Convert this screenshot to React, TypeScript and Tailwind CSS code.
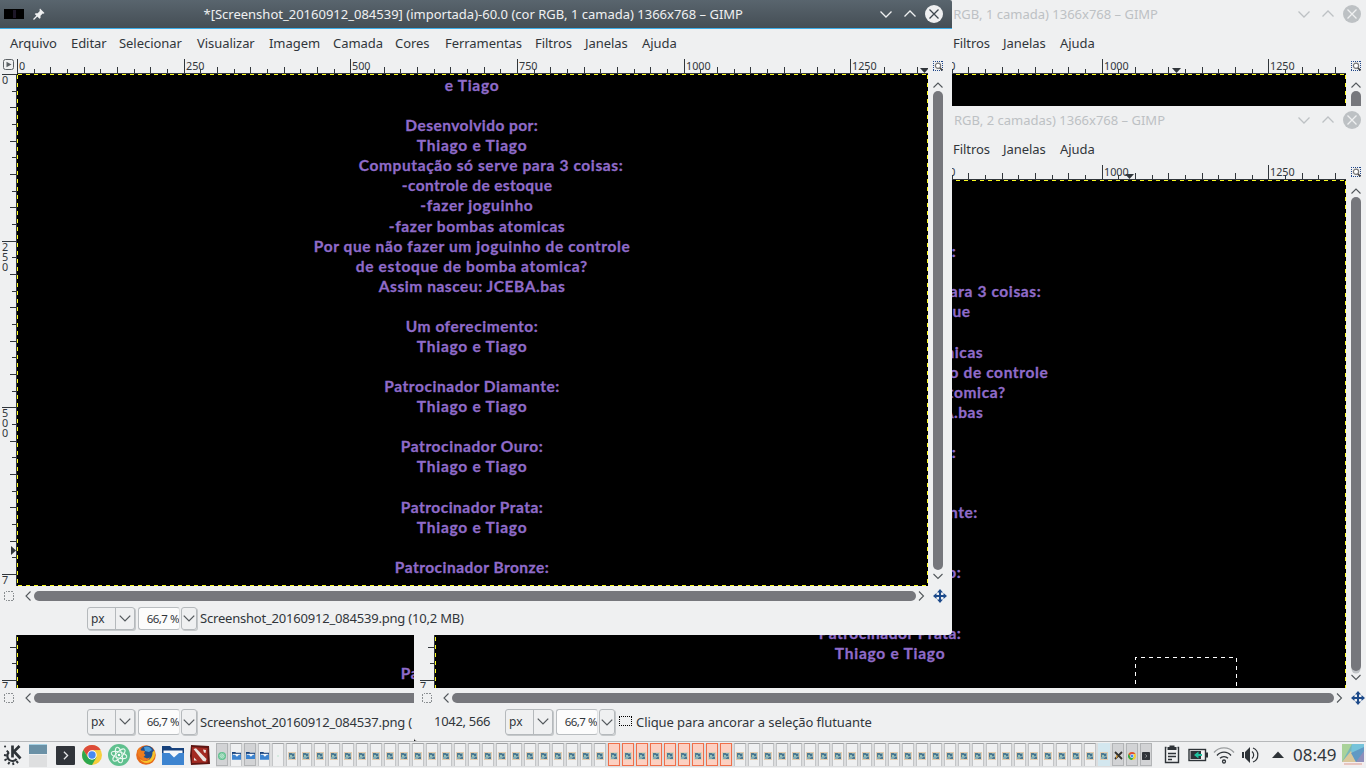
import React, { useLayoutEffect, useRef } from "react";

type Line = { text: string; left: number; right: number } | null;

const THIAGO: Line = { text: "Thiago e Tiago", left: 417, right: 527 };

const CREDITS: Line[] = [
  { text: "e Tiago", left: 445, right: 499 },
  null,
  { text: "Desenvolvido por:", left: 405.5, right: 538 },
  THIAGO,
  { text: "Computação só serve para 3 coisas:", left: 359, right: 623 },
  { text: "-controle de estoque", left: 402, right: 552 },
  { text: "-fazer joguinho", left: 420.5, right: 533 },
  { text: "-fazer bombas atomicas", left: 389, right: 565 },
  { text: "Por que não fazer um joguinho de controle", left: 314, right: 630 },
  { text: "de estoque de bomba atomica?", left: 356, right: 587.5 },
  { text: "Assim nasceu: JCEBA.bas", left: 379, right: 565 },
  null,
  { text: "Um oferecimento:", left: 406, right: 538 },
  THIAGO,
  null,
  { text: "Patrocinador Diamante:", left: 384.5, right: 559.5 },
  THIAGO,
  null,
  { text: "Patrocinador Ouro:", left: 401, right: 543 },
  THIAGO,
  null,
  { text: "Patrocinador Prata:", left: 401, right: 543 },
  THIAGO,
  null,
  { text: "Patrocinador Bronze:", left: 395, right: 549 },
];

/* Spreads the letters of one credit line over its measured width. */
function CreditLine({ line }: { line: Line }) {
  const ref = useRef<HTMLSpanElement>(null);
  useLayoutEffect(() => {
    const el = ref.current;
    if (!el || !line) return;
    el.style.letterSpacing = "0px";
    const natural = el.getBoundingClientRect().width;
    const target = line.right - line.left + 0.5;
    el.style.letterSpacing = (target - natural) / line.text.length + "px";
  }, [line]);
  return (
    <div className="h-[20.08px] whitespace-nowrap leading-[20px]">
      {line && (
        <span ref={ref} className="inline-block" style={{ marginLeft: line.left - 17.2 }}>
          {line.text}
        </span>
      )}
    </div>
  );
}

/* Shows the credit rows from..to, moved down by rowsDown rows. */
function Credits({ rowsDown, from, to }: { rowsDown: number; from: number; to: number }) {
  return (
    <div
      className="font-['Lato'] text-[15.5px] font-bold text-[#8f6bc9] [-webkit-text-stroke:0.3px_#8f6bc9]"
      style={{ paddingTop: 1 + (rowsDown + from) * 20.08 }}
    >
      {CREDITS.slice(from, to).map((l, i) => (
        <CreditLine key={i} line={l} />
      ))}
    </div>
  );
}

const STEPS = Array.from({ length: 55 }, (_, i) => i);

function HRuler({ marker }: { marker: number }) {
  return (
    <svg width="911" height="16" className="block shrink-0" shapeRendering="crispEdges">
      <rect x="-1" y="15" width="912" height="1" fill="#31363b" />
      {STEPS.map((i) => {
        const h = i % 10 === 0 ? 14 : i % 2 === 0 ? 6 : 4;
        return <rect key={i} x={Math.round((i * 50) / 3)} y={15 - h} width="1" height={h} fill="#31363b" />;
      })}
      {[0, 250, 500, 750, 1000, 1250].map((n) => (
        <text key={n} x={Math.round((n * 2) / 3) + 2} y="12" fontSize="10.8" fill="#31363b" fontFamily="Noto Sans, sans-serif">
          {n}
        </text>
      ))}
      <path d={`M${marker - 4} 10h9l-4.5 5z`} fill="#31363b" shapeRendering="auto" />
    </svg>
  );
}

function VRuler({ height, marker }: { height: number; marker?: number }) {
  const labels: [string, number][] = [["0", 0], ["250", 167], ["500", 333], ["7", 500]];
  return (
    <svg width="17" height={height} className="block shrink-0" shapeRendering="crispEdges">
      <rect x="16" y="0" width="1" height={height} fill="#31363b" />
      {STEPS.slice(0, 31).map((i) => {
        const w = i % 10 === 0 ? 14 : i % 2 === 0 ? 6 : 4;
        return <rect key={i} x={16 - w} y={Math.round((i * 50) / 3)} width={w} height="1" fill="#31363b" />;
      })}
      {labels.map(([s, y]) =>
        s.split("").map((c, k) => (
          <text key={s + k} x="2" y={y + 10 + k * 10} fontSize="10.8" fill="#31363b" fontFamily="Noto Sans, sans-serif">
            {c}
          </text>
        ))
      )}
      {marker !== undefined && <path d={`M11 ${marker - 4.5}v9l5-4.5z`} fill="#31363b" shapeRendering="auto" />}
    </svg>
  );
}

function Chevron({ dir, color = "#53585c", size = 12 }: { dir: "up" | "down" | "left" | "right"; color?: string; size?: number }) {
  const d = {
    up: "M1.5 8.5 6 4l4.500 4.500",
    down: "M1.500 4 6 8.500 10.500 4",
    left: "M8.500 1.500 4 6l4.500 4.500",
    right: "M4 1.500 8.500 6 4 10.500",
  }[dir];
  return (
    <svg width={size} height={size} viewBox="0 0 12 12" className="block shrink-0">
      <path d={d} fill="none" stroke={color} strokeWidth="1.1" />
    </svg>
  );
}

const MENU = ["Arquivo", "Editar", "Selecionar", "Visualizar", "Imagem", "Camada", "Cores", "Ferramentas", "Filtros", "Janelas", "Ajuda"];

function UnitBoxes({ tall }: { tall: boolean }) {
  const h = tall ? "h-[26px]" : "h-[23px]";
  return (
    <>
      <div className={`flex w-[48px] items-center rounded-[3px] border border-[#b5b9bc] bg-[#eff0f1] shadow-[1px_1px_0_#c5c8ca] ${h}`}>
        <span className="w-[27px] pl-[3px] text-[12px]">px</span>
        <span className="flex h-full flex-1 items-center justify-center border-l border-[#b5b9bc] pb-[2px]">
          <Chevron dir="down" size={14} />
        </span>
      </div>
      <div className={`ml-[3px] flex w-[42px] items-center justify-end overflow-hidden whitespace-nowrap rounded-[3px] border border-[#b9bdc0] border-r-[#e0e2e3] bg-[#fcfcfc] text-[11.5px] tracking-[-0.5px] ${h}`}>
        66,7 %
      </div>
      <div className={`ml-px flex w-[16px] items-center justify-center rounded-[3px] border border-[#b5b9bc] pb-px shadow-[1px_1px_0_#c5c8ca] ${h}`}>
        <Chevron dir="down" size={14} />
      </div>
    </>
  );
}

interface WinProps {
  title: string;
  active?: boolean;
  titleEnd: string;
  tall?: boolean;
  marker: number;
  vMarker?: number;
  rowsDown?: number;
  rows?: [number, number];
  menuFrom?: number;
  status: React.ReactNode;
  coords?: string;
  selection?: boolean;
}

function GimpWindow({
  title,
  active = false,
  titleEnd,
  tall = false,
  marker,
  vMarker,
  rowsDown = 0,
  rows = [0, 25],
  menuFrom = 0,
  status,
  coords,
  selection,
}: WinProps) {
  const tc = active ? "#eff0f1" : "#bdc1c4";
  return (
    <div className="flex h-[635px] w-[952px] shrink-0 flex-col bg-[#eff0f1]">
      <div className={`flex h-[29px] shrink-0 items-center border-b ${active ? "border-[#3daee9] bg-linear-to-b from-[#59656e] to-[#454e55]" : "border-[#eff0f1]"}`}>
        {active && (
          <>
            <div className="ml-1 flex h-[10px] w-5 justify-center bg-black">
              <div className="mt-px h-2 w-[3px] bg-[#1d1728]" />
            </div>
            <svg width="12" height="12" viewBox="0 0 12 12" className="ml-[9px] block shrink-0">
              <path d="M7 .5 11.500 5l-1 .7-.8-.2-2.200 2.200v2.300l-1 .8L1.700 6l1-.8h2L6.800 3l-.3-1.200z" fill="#eff0f1" />
              <path d="M.5 11.500 4.500 7.500" stroke="#eff0f1" strokeWidth="1.300" />
            </svg>
          </>
        )}
        <span className={`flex-1 whitespace-nowrap pt-[2px] text-right text-[13px] ${titleEnd}`} style={{ color: tc }}>
          {title}
        </span>
        <svg width="66" height="20" viewBox="0 0 66 20" className="mr-[8px] block shrink-0">
          <path d="M2.500 7.500 8 13l5.500-5.500M26.500 12.500 32 7l5.500 5.500" fill="none" stroke={tc} strokeWidth="1.300" />
          <circle cx="56" cy="10" r="9" fill={tc} />
          <path d="M51.500 5.500l9 9m0-9-9 9" stroke={active ? "#3f484f" : "#eff0f1"} strokeWidth="1.300" />
        </svg>
      </div>
      <div className="grid h-[29px] shrink-0 grid-cols-[61px_48px_78px_72px_64px_62px_50px_90px_50px_57px_auto] items-center pl-[10px] text-[13px] tracking-[-0.05px]">
        {MENU.map((m, i) => (
          <span key={m}>{i >= menuFrom ? m : ""}</span>
        ))}
      </div>
      <div className="flex h-4 shrink-0">
        <div className="flex w-[17px] pl-[3px] pt-px">
          <svg width="12" height="12" viewBox="0 0 12 12" className="block">
            <rect x=".5" y=".5" width="10" height="10" rx="2" fill="none" stroke="#5c6165" />
            <path d="M3.500 2.700 8.500 5.500l-5 2.800z" fill="#5c6165" />
          </svg>
        </div>
        <HRuler marker={marker} />
        <div className="flex flex-1 pl-[5px] pt-[3px]">
          <svg width="11" height="11" viewBox="0 0 11 11" className="block">
            <g fill="#20478a" shapeRendering="crispEdges">
              {[0, 2, 4, 6, 8].map((k) => (
                <React.Fragment key={k}>
                  <rect x={k} y="0" width="1" height="1" />
                  <rect x={k} y="9" width="1" height="1" />
                  <rect x="0" y={k} width="1" height="1" />
                  <rect x="9" y={k} width="1" height="1" />
                </React.Fragment>
              ))}
            </g>
            <circle cx="5" cy="4.800" r="2.600" fill="#fff" stroke="#777" strokeWidth="1.200" />
            <path d="M7 7l2.500 2.500" stroke="#444" strokeWidth="1.700" />
          </svg>
        </div>
      </div>
      <div className={`flex shrink-0 ${tall ? "h-[508px]" : "h-[512px]"}`}>
        <VRuler height={tall ? 508 : 512} marker={vMarker} />
        <div className="relative w-[911px] overflow-hidden bg-black">
          <Credits rowsDown={rowsDown} from={rows[0]} to={rows[1]} />
          <svg width="911" height="512" className="absolute left-0 top-0" shapeRendering="crispEdges">
            <path d="M0 .5H911M.5 0V512M910.500 0V512M0 511.500H911" fill="none" stroke="#fafa1e" strokeDasharray="4 4" strokeDashoffset="7" />
            {selection && <path d="M700.500 512V477.500H801.500V512" fill="none" stroke="#fff" strokeDasharray="4 4" />}
          </svg>
        </div>
        <div className="flex flex-1 flex-col items-center pr-[4px] pt-[5px]">
          <Chevron dir="up" />
          <div className={`w-[10px] flex-1 rounded-full bg-[#76777c] ${selection ? "shadow-[0_3px_0_-0.5px_#bfc3c6]" : ""}`} />
          <Chevron dir="down" />
          <div className={selection ? "h-[5px]" : "h-1"} />
        </div>
      </div>
      <div className="flex h-5 shrink-0 items-center">
        <svg width="10" height="10" viewBox="0 0 10 10" className="ml-1 block shrink-0" shapeRendering="crispEdges">
          <path d="M.5 3V.5H3M.5 7v2.500H3M7 .5h2.500V3M7 9.500h2.500V7M4 .5h2M4 9.500h2M.5 4v2M9.500 4v2" fill="none" stroke="#8b8f92" strokeDasharray="2 1.500" />
        </svg>
        <div className="ml-2 flex w-[905px] items-center">
          <Chevron dir="left" />
          <div className="h-[10px] w-[882px] rounded-full bg-[#76777c]" />
          <span className="-ml-px"><Chevron dir="right" /></span>
        </div>
        <svg width="14" height="14" viewBox="0 0 14 14" className="ml-[6px] block shrink-0">
          <path d="M7 1v12M1 7h12" stroke="#1d4a8a" strokeWidth="2" />
          <path d="M7 0l3 3.500H4zM7 14l3-3.500H4zM0 7l3.500-3v6zM14 7l-3.500-3v6z" fill="#1d4a8a" />
        </svg>
      </div>
      <div className="flex flex-1 items-start pt-px text-[13px]">
        <div className="flex items-center">
          <span className="w-[87px] whitespace-nowrap pl-[16px] tracking-[-0.3px]">{coords}</span>
          <UnitBoxes tall={tall} />
          <div className={`ml-[3px] flex items-center whitespace-nowrap ${tall ? "pt-[2px]" : ""}`}>{status}</div>
        </div>
      </div>
    </div>
  );
}

/* ---- launcher icons ---- */

function ChromeIcon({ size }: { size: number }) {
  return (
    <svg width={size} height={size} viewBox="0 0 20 20" className="block shrink-0">
      <circle cx="10" cy="10" r="10" fill="#f7ce3c" />
      <path d="M1.340 5A10 10 0 0 1 18.660 5L10 5.200 6 12z" fill="#dd4b3a" />
      <path d="M1.340 5A10 10 0 0 0 10 20l4.500-7.800L6 12.500z" fill="#2da84e" />
      <circle cx="10" cy="10" r="4.700" fill="#fff" />
      <circle cx="10" cy="10" r="3.700" fill="#4689f0" />
    </svg>
  );
}

function AtomIcon({ size }: { size: number }) {
  return (
    <svg width={size} height={size} viewBox="0 0 22 22" className="block shrink-0">
      <circle cx="11" cy="11" r="11" fill="#5fc08e" />
      <g fill="none" stroke="#e9f8ef" strokeWidth="1">
        <ellipse cx="11" cy="11" rx="8" ry="3" transform="rotate(15 11 11)" />
        <ellipse cx="11" cy="11" rx="8" ry="3" transform="rotate(75 11 11)" />
        <ellipse cx="11" cy="11" rx="8" ry="3" transform="rotate(135 11 11)" />
      </g>
      <circle cx="11" cy="11" r="1.300" fill="#fff" />
    </svg>
  );
}

function FolderIcon({ width }: { width: number }) {
  return (
    <svg width={width} height={(width * 19) / 22} viewBox="0 0 22 19" className="block shrink-0">
      <path d="M0 0h8l2 2h12v8H0z" fill="#16417c" />
      <path d="M1.500 4.500h19V13h-19z" fill="#f4f7fa" />
      <path d="M0 7h7.500l4.500 4.500L17 7h5v12H0z" fill="#3d84d0" />
    </svg>
  );
}

function TerminalIcon({ size }: { size: number }) {
  return (
    <svg width={size} height={size} viewBox="0 0 18 18" className="block shrink-0">
      <rect width="18" height="18" rx="1" fill="#30343a" />
      <path d="M7.500 5.500l3.500 3.500-3.500 3.500" fill="none" stroke="#e4e6e8" strokeWidth="1.200" />
    </svg>
  );
}

function KIcon() {
  return (
    <svg width="20" height="22" viewBox="0 0 20 22" className="block shrink-0" fill="none" stroke="#2e3338">
      <path d="M9.500 1.500v12M16.500 2l-5.500 5.500 6.500 7" strokeWidth="2.700" />
      <path d="M6 8.300a5 5 0 1 0 7.500 6.500" strokeWidth="2.200" />
      <path d="M5.500 8.500 3.700 6.700M3.600 11.500 1 11M3.800 15 1.500 16.500M6.500 18l-1.300 2.300M10 18.500l.5 2.500M13.300 17l1.800 2" strokeWidth="1.900" />
      <path d="M2 2.500h.1" strokeWidth="2" strokeLinecap="round" />
    </svg>
  );
}

function FirefoxIcon() {
  return (
    <svg width="20" height="20" viewBox="0 0 20 20" className="block shrink-0">
      <circle cx="10" cy="10" r="9.800" fill="#e66a1a" />
      <circle cx="11" cy="8" r="7.300" fill="#20508f" />
      <path d="M8 2a7 7 0 0 1 8 3l-3 2-4-1z" fill="#4a9bd8" />
      <path d="M1 5.500 3.500 2.500l1.500 3 4 .5-1 2.500 1.500 1.500-2 2 3.500 1.500 3-1-1.500 2.500-5 .5-5-4.500z" fill="#ee7d1e" />
      <path d="M18.500 5.500c1.500 5-.5 9.500-4 11.500-4 2-9 .5-10.500-3 3 2.500 7 3 10 0 2.500-2.500 2.500-5 2.500-7z" fill="#f8c32c" />
    </svg>
  );
}

function DotaIcon() {
  return (
    <svg width="20" height="20" viewBox="0 0 20 20" className="block shrink-0">
      <path d="M1 0l18 1 1 18-19 1-1-9z" fill="#5d1613" />
      <path d="M2 2l15.500 1v14.500L2 18z" fill="#a32a22" />
      <path d="M3.500 4 6 3.200 16.500 14l-1 2.500-2.500-.5z" fill="#e9e3df" />
      <path d="M13 4.500l3 .5-.5 3-1.500-.5zM4 12.500l3 3H4z" fill="#e9e3df" />
    </svg>
  );
}

function Thumb() {
  return (
    <svg width="8" height="8" viewBox="0 0 8 8" className="block">
      <rect width="8" height="8" fill="#e2ccb0" />
      <rect x="1" y="1" width="6" height="6" fill="#84abb5" />
      <path d="M1 1h3v2H2v2H1zM5 5h2v2H4V6h1z" fill="#4d7b94" />
      <path d="M4 2h2v2H4z" fill="#43718e" />
      <path d="M2 3h2v2H2z" fill="#9ac4b5" />
    </svg>
  );
}

function Task({ i }: { i: number }) {
  const orange = i >= 28 && i <= 36;
  const dark = i === 0 || i === 2 || i >= 64;
  const box = orange
    ? "border border-[#ef6f4a] bg-[#fcd0c2]"
    : i === 63
      ? "border border-[#d3e7ef] bg-[#d3e7ef]"
      : dark
        ? "border border-[#b2b4b6] bg-[#d2d3d5]"
        : "border border-b-0 border-[#c3c5c7] border-t-[#9fa1a3] bg-[#eff0f1]";
  let icon: React.ReactNode = <Thumb />;
  if (i === 0) icon = <AtomIcon size={8} />;
  else if (i < 4) icon = <FolderIcon width={9} />;
  else if (i === 4) icon = <span className="h-[2px] w-[2px] bg-[#d5eadf]" />;
  else if (i === 64)
    icon = (
      <svg width="9" height="9" viewBox="0 0 9 9" className="block">
        <path d="M1 1l7 7M8 1 1 8" stroke="#34322f" strokeWidth="1.800" />
        <path d="M2 4l2 1-2 3z" fill="#d79a35" />
      </svg>
    );
  else if (i === 65) icon = <ChromeIcon size={8} />;
  else if (i === 66) icon = <TerminalIcon size={8} />;
  return <div className={`flex h-[23px] w-[12px] shrink-0 items-center justify-center pt-[2px] ${box}`}>{icon}</div>;
}

const TASKS = Array.from({ length: 67 }, (_, i) => i);

function Taskbar() {
  return (
    <div className="flex h-[27px] shrink-0 items-center border-t border-[#b6b8ba] bg-[#eff0f1]">
      <div className="w-[29px] pl-[3px]">
        <KIcon />
      </div>
      <div className="flex w-[18px] flex-col gap-px">
        <div className="h-[10px] border-t border-[#a6d2e5] bg-[#6b91a6]" />
        <div className="h-[12px] bg-[#dedfe0]" />
      </div>
      <div className="ml-[9px] flex items-center">
        <TerminalIcon size={19} />
        <span className="ml-[7px]"><ChromeIcon size={20} /></span>
        <span className="ml-[6px]"><AtomIcon size={22} /></span>
        <span className="ml-[6px]"><FirefoxIcon /></span>
        <span className="ml-[6px]"><FolderIcon width={22} /></span>
        <span className="ml-[6px]"><DotaIcon /></span>
      </div>
      <div className="ml-[6px] flex h-[24px] gap-[2px] bg-[#dcddde]">
        {TASKS.map((i) => (
          <Task key={i} i={i} />
        ))}
      </div>
      <svg width="126" height="24" viewBox="0 0 126 24" className="ml-[10px] block shrink-0">
        <path d="M4.500 4.500h-1v15h13v-15h-1" fill="none" stroke="#2e3338" strokeWidth="1.400" />
        <path d="M5.500 4h2V2.500h5V4h2v3h-9z" fill="#2e3338" />
        <path d="M6 10.500h8M6 13.500h8M6 16.500h4" stroke="#2e3338" strokeWidth="1.300" />
        <rect x="27" y="6.500" width="16.500" height="11" fill="none" stroke="#2e3338" strokeWidth="1.400" />
        <rect x="44" y="9.500" width="2" height="5" fill="#2e3338" />
        <rect x="28.500" y="8" width="10.500" height="8" fill="#2e3338" />
        <path d="M32 12l4.500-3.500V11H40v2h-3.500v2.500z" fill="#1fc4a0" />
        <g fill="none" stroke="#2e3338" strokeWidth="1.300">
          <path d="M52 9.500a13 13 0 0 1 20 0" stroke="#9a9d9f" />
          <path d="M55 12.500a9 9 0 0 1 14 0" />
          <path d="M58 15.300a5.400 5.400 0 0 1 8 0" />
          <circle cx="62" cy="18.500" r="1.500" />
        </g>
        <path d="M80 9h2v6h-2zM83 9l5-5v16l-5-5z" fill="#2e3338" />
        <path d="M90 8.500a4.500 4.500 0 0 1 0 7M91 5a7.500 7.500 0 0 1 0 14" fill="none" stroke="#2e3338" strokeWidth="1.200" />
        <path d="M110 15l6-6.500 6 6.500z" fill="#2e3338" />
      </svg>
      <span className="ml-[5px] w-[49px] whitespace-nowrap text-[17px] leading-[24px] text-[#31363b]">08:49</span>
      <svg width="22" height="22" viewBox="0 0 22 22" className="block shrink-0">
        <rect width="22" height="18" fill="#78b7b8" />
        <path d="M0 0h10L0 18z" fill="#a9d29a" />
        <path d="M10 0h12v9L9 9z" fill="#76c3da" />
        <path d="M0 18 9 7l5 11z" fill="#d9c79a" />
        <path d="M9 9l13-6v15h-8z" fill="#6199c4" />
        <path d="M22 7v11h-8z" fill="#8f8fbb" />
        <rect y="18" width="22" height="4" fill="#f4eeee" />
        <path d="M2 20h18" stroke="#d99b91" />
      </svg>
    </div>
  );
}

export default function App() {
  return (
    <div className="flex h-[768px] w-[1366px] flex-col overflow-hidden bg-black font-['Noto_Sans',sans-serif] text-[#31363b]">
      <div className="relative h-[741px] shrink-0 overflow-hidden">
        <div className="absolute left-[418px] top-0">
          <GimpWindow title="RGB, 1 camada) 1366x768 – GIMP" titleEnd="pr-[138px]" marker={741} rows={[0, 0]} menuFrom={8} status={null} />
        </div>
        <div className="absolute left-0 top-[106px] w-[414px] overflow-hidden">
          <GimpWindow
            title=""
            titleEnd=""
            tall
            marker={100}
            rowsDown={3}
            rows={[21, 22]}
            menuFrom={11}
            status={<span className="tracking-[-0.2px]">Screenshot_20160912_084537.png (</span>}
          />
        </div>
        <div className="absolute left-[414px] top-[106px] w-[952px] overflow-hidden rounded-bl-[3px] bg-[#eff0f1] pl-1">
          <GimpWindow
            title="RGB, 2 camadas) 1366x768 – GIMP"
            titleEnd="pr-[131px]"
            tall
            marker={694}
            rowsDown={1}
            rows={[2, 23]}
            menuFrom={8}
            coords="1042, 566"
            selection
            status={
              <>
                <span className="ml-px mr-[4px] mt-[-4px] h-[10px] w-[13px] border border-dotted border-black" />
                <span className="tracking-[-0.08px]">Clique para ancorar a seleção flutuante</span>
              </>
            }
          />
        </div>
        <div className="absolute left-0 top-0 overflow-hidden rounded-br-[4px] rounded-tr-[2px]">
          <GimpWindow
            active
            title="*[Screenshot_20160912_084539] (importada)-60.0 (cor RGB, 1 camada) 1366x768 – GIMP"
            titleEnd="pr-[135px]"
            marker={907}
            vMarker={476.5}
            status={<span className="tracking-[-0.2px]">Screenshot_20160912_084539.png (10,2 MB)</span>}
          />
        </div>
      </div>
      <Taskbar />
    </div>
  );
}
